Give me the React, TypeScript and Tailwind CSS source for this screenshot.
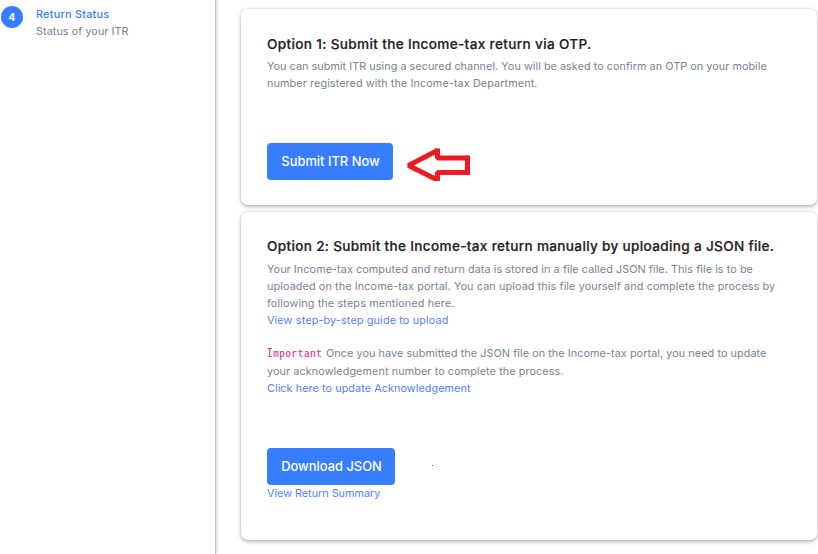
import type { ReactNode } from "react";

const FONT = "font-['Inter',sans-serif]";

function Card({ className, children }: { className: string; children: ReactNode }) {
  return (
    <section
      className={`w-[576px] rounded-[7px] bg-white px-[26px] shadow-[0_2px_4px_rgba(0,0,0,0.25),0_0_3px_rgba(0,0,0,0.16)] ${className}`}
    >
      {children}
    </section>
  );
}

function Button({ className, children }: { className: string; children: ReactNode }) {
  return (
    <button
      className={`flex h-[37px] items-center justify-center rounded-[4px] bg-[#377dff] pt-px pl-px text-[12.9px] leading-none font-medium text-white ${className}`}
    >
      {children}
    </button>
  );
}

function ArrowLeft() {
  return (
    <svg className="ml-[12px] h-[38px] w-[68px]" viewBox="0 0 68 38" fill="none" stroke="#ed1c24" strokeWidth="5">
      <path d="M3.500 22.500 32.500 7.500v7.500h30v14.500h-30v7.500Z" strokeLinejoin="bevel" />
      <path d="M60 15h2.500v14.500h-2.500" strokeLinejoin="miter" />
      <path d="M30 5.500h5v4h-5ZM30 35h5v3h-5Z" fill="#ed1c24" stroke="none" />
    </svg>
  );
}

export default function App() {
  return (
    <div className={`flex h-[554px] w-[818px] overflow-hidden bg-white text-[10.8px] leading-[17px] text-[#77838f] ${FONT}`}>
      <aside className="flex w-[216px] shrink-0 items-start border-r border-[#c4c4c4] pt-[6px] pl-[1px] shadow-[0_0_3px_rgba(0,0,0,0.3)]">
        <div className="flex h-[22px] w-[22px] items-center justify-center rounded-full bg-[#377dff] text-[10px] font-bold text-white">
          4
        </div>
        <div className="ml-[13px] whitespace-nowrap">
          <div className="font-medium tracking-[0.27px] text-[#377dff]">Return Status</div>
          <div className="tracking-[0.07px]">Status of your ITR</div>
        </div>
      </aside>
      <main className="flex flex-col gap-[7px] pt-[9px] pl-[25px] whitespace-nowrap">
        <Card className="h-[196px] pt-[25px]">
          <h2 className="h-[24px] text-[13.6px] leading-[20px] font-medium tracking-[0.34px] text-[#1e2022] [-webkit-text-stroke:0.2px_#1e2022]">
            Option 1: Submit the Income-tax return via OTP.
          </h2>
          <p className="tracking-[0.053px]">You can submit ITR using a secured channel. You will be asked to confirm an OTP on your mobile</p>
          <p className="tracking-[0.11px]">number registered with the Income-tax Department.</p>
          <div className="mt-[51px] flex h-[37px] items-center">
            <Button className="w-[126px]">Submit ITR Now</Button>
            <ArrowLeft />
          </div>
        </Card>
        <Card className="h-[328px] pt-[24px]">
          <h2 className="h-[25px] text-[13.6px] leading-[20px] font-medium tracking-[0.32px] text-[#1e2022] [-webkit-text-stroke:0.2px_#1e2022]">
            Option 2: Submit the Income-tax return manually by uploading a JSON file.
          </h2>
          <p className="tracking-[0.083px]">Your Income-tax computed and return data is stored in a file called JSON file. This file is to be</p>
          <p className="tracking-[0.115px]">uploaded on the Income-tax portal. You can upload this file yourself and complete the process by</p>
          <p className="tracking-[0.15px]">following the steps mentioned here.</p>
          <p className="tracking-[0.15px] text-[#5680ff]">View step-by-step guide to upload</p>
          <div className="mt-[16px] flex h-[18px] gap-[4px]">
            <code className="-mt-px w-[55px] font-['Noto_Sans_Mono_CJK_SC','DejaVu_Sans_Mono',monospace] text-[11px] tracking-[0.65px] text-[#d63384]">Important</code>
            <span className="tracking-[0.08px]">
              Once you have submitted the JSON file on the Income-tax portal, you need to update
            </span>
          </div>
          <p className="tracking-[0.1px]">your acknowledgement number to complete the process.</p>
          <p className="tracking-[0.08px] text-[#5680ff]">Click here to update Acknowledgement</p>
          <div className="mt-[51px] flex items-center">
            <Button className="w-[128px]">Download JSON</Button>
            <span className="mb-[3px] ml-[37px] h-px w-px bg-[#ed1c24]" />
          </div>
          <p className="text-[#5680ff]">View Return Summary</p>
        </Card>
      </main>
    </div>
  );
}
